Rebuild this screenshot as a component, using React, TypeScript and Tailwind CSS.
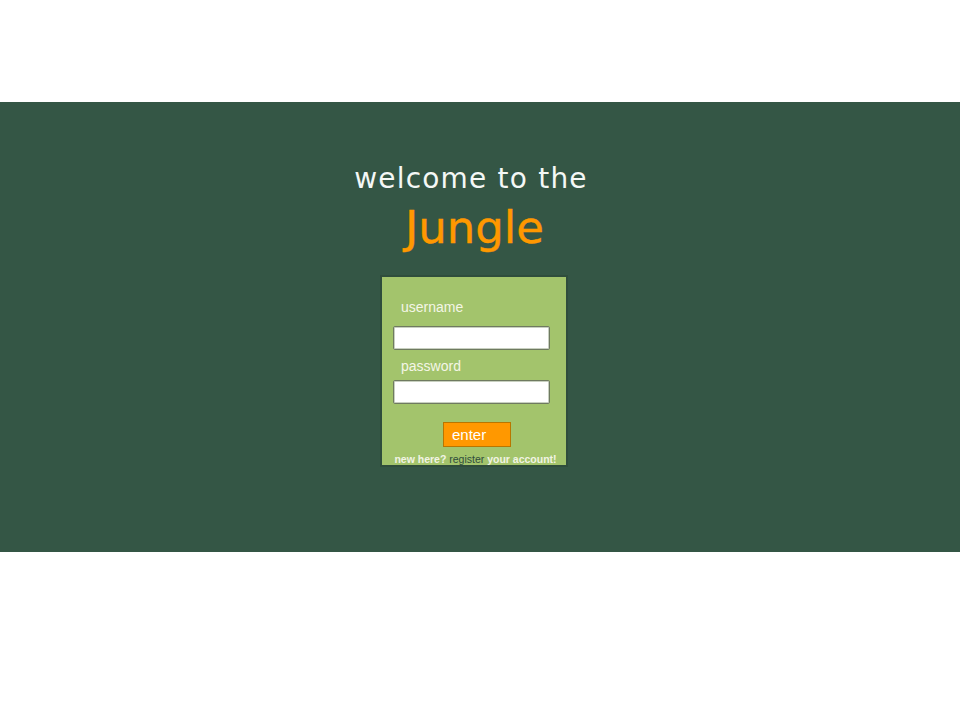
import React from "react";

export default function App() {
  return (
    <div className="w-[960px] h-[720px] bg-white flex flex-col" style={{ fontFamily: "'Liberation Sans', Arial, sans-serif" }}>
      <div className="h-[102px]" />
      <div className="h-[450px] bg-[#345645]">
        <div className="w-[949px] flex flex-col items-center">
          <div className="mt-[57px] mr-[7px] text-[28px] leading-[40px] text-[#f4f8f6] tracking-[1.2px]" style={{ fontFamily: "'DejaVu Sans', sans-serif" }}>
            welcome to the
          </div>
          <div className="mt-[2px] text-[45px] leading-[54px] text-[#ff9800]" style={{ fontFamily: "'DejaVu Sans', sans-serif", WebkitTextStroke: "0.4px #ff9800" }}>
            Jungle
          </div>
          <div className="mt-[20px] ml-[-1px] w-[188px] h-[192px] bg-[#a3c46c] border-2 border-[#2f4d3c] flex flex-col px-[11px]">
            <div className="mt-[22px] ml-[8px] text-[14px] leading-[16px] text-[#f4f6e6]">username</div>
            <input className="mt-[11px] w-[157px] h-[24px] bg-white border border-[#6f7a60] rounded-[2px] shadow-[inset_0_0_0_1px_#c8d0c0]" />
            <div className="mt-[8px] ml-[8px] text-[14px] leading-[16px] text-[#f4f6e6]">password</div>
            <input type="password" className="mt-[6px] w-[157px] h-[24px] bg-white border border-[#6f7a60] rounded-[2px] shadow-[inset_0_0_0_1px_#c8d0c0]" />
            <div className="flex justify-center mt-[18px]">
              <button className="ml-[6px] w-[68px] h-[25px] bg-[#ff9800] border border-[#b87600] text-left pl-[8px] text-[15px] leading-[20px] text-white">enter</button>
            </div>
            <div className="mt-[6px] -mx-[12px] pl-[3px] text-center text-[10.5px] leading-[12px] font-bold text-[#f2f4e4]">
              new here? <span className="font-normal text-[#2f4d3c]">register</span> your account!
            </div>
          </div>
        </div>
      </div>
    </div>
  );
}
